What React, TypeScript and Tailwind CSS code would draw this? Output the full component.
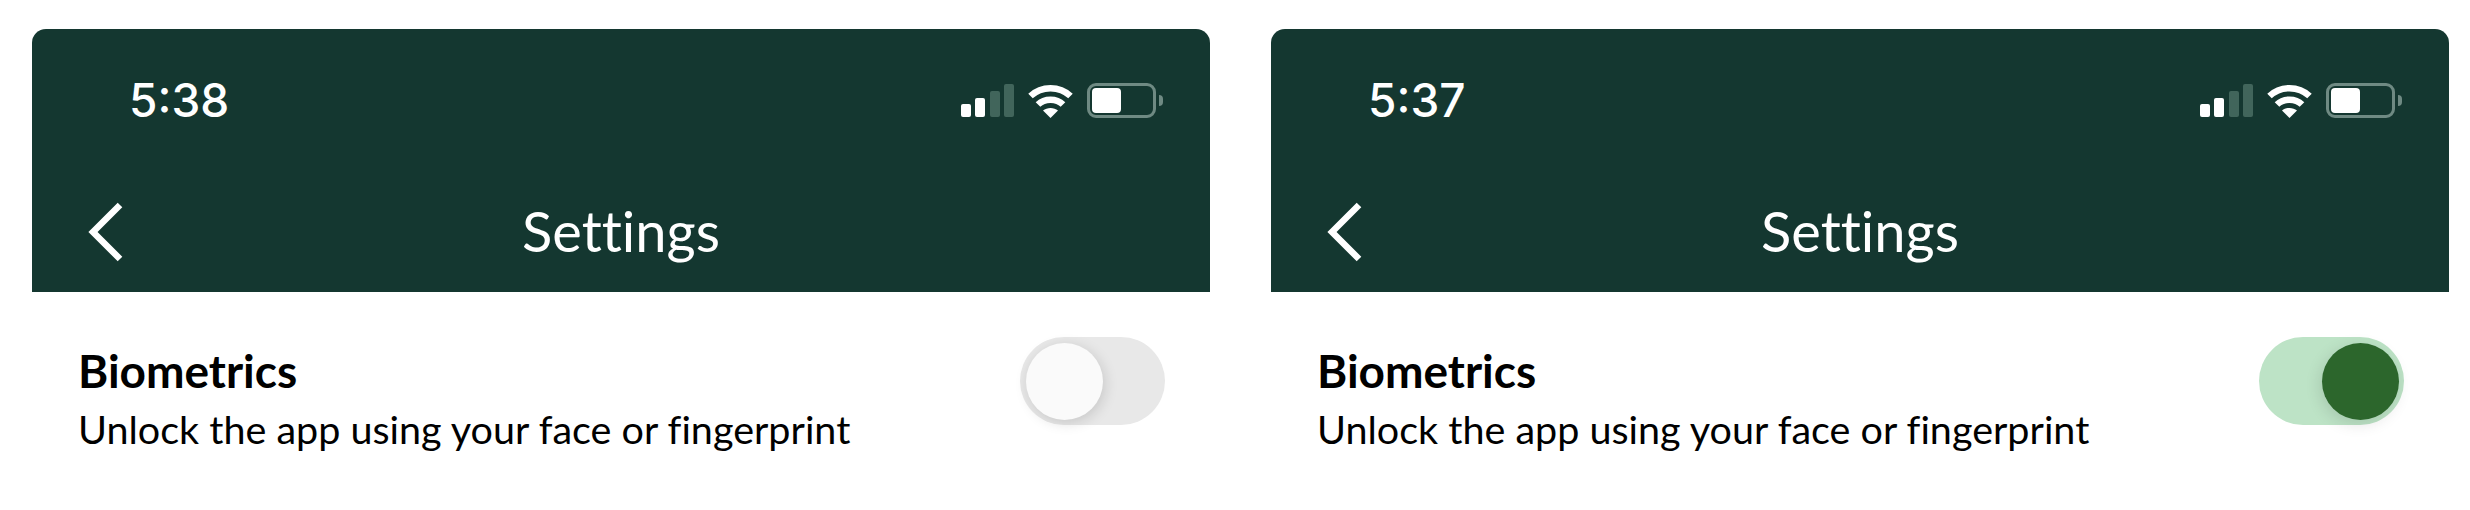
function StatusIcons() {
  return (
    <div className="flex items-center">
      {/* signal */}
      <div className="flex h-[33px] w-[53px] items-end justify-between">
        <div className="h-[13px] w-[10px] rounded-[2px] bg-white" />
        <div className="h-[19px] w-[10px] rounded-[2px] bg-white" />
        <div className="h-[26px] w-[10px] rounded-[2px] bg-[#41655b]" />
        <div className="h-[33px] w-[10px] rounded-[2px] bg-[#41655b]" />
      </div>
      {/* wifi */}
      <svg className="ml-[14px]" width="45" height="35" viewBox="0 0 45 35" fill="none">
        <path d="M2.5 13C13.5 2.5 31.5 2.5 42.5 13" stroke="white" strokeWidth="6.5" />
        <path d="M10 21.5C16.5 15 28.5 15 35 21.5" stroke="white" strokeWidth="6.5" />
        <path d="M15 27.5C19 24 26 24 30 27.5L22.5 35Z" fill="white" />
      </svg>
      {/* battery */}
      <div className="ml-[14px] flex items-center">
        <div className="h-[35px] w-[69px] rounded-[9px] border-[3px] border-[#6f8a83] p-[2px]">
          <div className="h-full w-[29px] rounded-[4px] bg-white" />
        </div>
        <div className="ml-[3px] h-[11px] w-[4px] rounded-r-full bg-[#6f8a83]" />
      </div>
    </div>
  );
}

function Toggle({ on }: { on: boolean }) {
  return (
    <div
      className={
        on
          ? 'flex h-[88px] w-[145px] items-center justify-end rounded-full bg-[#bde3c6] pr-[5px]'
          : 'flex h-[88px] w-[145px] items-center justify-start rounded-full bg-[#e8e8e8] pl-[6px]'
      }
    >
      <div
        className={
          on
            ? 'h-[77px] w-[77px] rounded-full bg-[#2c662c] shadow-[-2px_4px_16px_rgba(0,0,0,0.12)]'
            : 'h-[77px] w-[77px] rounded-full bg-[#fafafa] shadow-[2px_3px_14px_rgba(0,0,0,0.14)]'
        }
      />
    </div>
  );
}

function Panel({ time, on }: { time: string; on: boolean }) {
  return (
    <div className="w-[1178px]">
      <div className="h-[263px] rounded-t-[14px] bg-[#143730] text-white">
        <div className="flex items-center justify-between pl-[97px] pr-[47px] pt-[53px]">
          <span className="font-['Inter',sans-serif] text-[46px] leading-[36px] font-medium">{time}</span>
          <StatusIcons />
        </div>
        <div className="relative mt-[82px] flex h-[62px] items-center justify-center">
          <svg className="absolute left-[54px] top-[2px]" width="38" height="60" viewBox="0 0 38 60" fill="none">
            <path d="M34 3L7 30L34 57" stroke="white" strokeWidth="6.5" />
          </svg>
          <span className="font-['Lato',sans-serif] text-[56px] leading-[62px] font-normal [font-variant-ligatures:none]">Settings</span>
        </div>
      </div>
      <div className="flex items-start justify-between pl-[46px] pr-[45px] pt-[45px]">
        <div className="pt-[10px] font-['Lato',sans-serif] text-black [font-variant-ligatures:none]">
          <div className="text-[46px] leading-[48px] font-bold">Biometrics</div>
          <div className="mt-[11px] text-[39.5px] leading-[46px]">Unlock the app using your face or fingerprint</div>
        </div>
        <Toggle on={on} />
      </div>
    </div>
  );
}

export default function App() {
  return (
    <div className="flex h-[510px] w-[2470px] gap-[61px] bg-white pl-[32px] pt-[29px]">
      <Panel time="5:38" on={false} />
      <Panel time="5:37" on={true} />
    </div>
  );
}
